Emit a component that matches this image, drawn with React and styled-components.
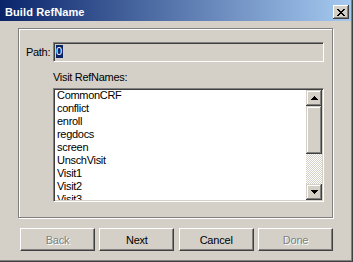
import React from 'react'
import styled, { createGlobalStyle } from 'styled-components'

const GlobalStyle = createGlobalStyle`
  html, body {
    margin: 0;
    padding: 0;
    background: #d4d0c8;
  }
  body {
    font-family: "Liberation Sans", Arial, sans-serif;
    font-size: 11px;
  }
  * {
    box-sizing: border-box;
  }
`

const Window = styled.div`
  width: 353px;
  height: 262px;
  padding: 0 2px 2px 0;
  background: #d4d0c8;
  box-shadow: inset -1px -1px #404040, inset -2px -2px #808080;
  display: flex;
  flex-direction: column;
`

const TitleBar = styled.div`
  height: 21px;
  display: flex;
  align-items: center;
  justify-content: space-between;
  padding: 3px 2px 0 5px;
  background: linear-gradient(to right, #0a246a, #a6caf0);
`

const Title = styled.div`
  color: #fff;
  font-weight: bold;
  font-size: 11px;
  letter-spacing: 0.1px;
`

const CloseButton = styled.div`
  width: 16px;
  height: 14px;
  display: flex;
  align-items: center;
  justify-content: center;
  background: #d4d0c8;
  box-shadow: inset -1px -1px #404040, inset 1px 1px #fff, inset -2px -2px #808080;
`

const Body = styled.div`
  padding: 7px 0 0 18px;
`

const Frame = styled.div`
  width: 315px;
  height: 190px;
  border: 1px solid #808080;
  box-shadow: inset 1px 1px #fff, 1px 1px #fff;
  padding: 13px 0 0 7px;
  display: grid;
  grid-template-columns: 27px 271px;
  align-content: start;
`

const Label = styled.div`
  color: #000;
  line-height: 13px;
  letter-spacing: -0.3px;
  white-space: nowrap;
  grid-column: ${(p) => p.$col || 'auto'};
  margin-top: ${(p) => p.$top || 0}px;
  margin-bottom: ${(p) => p.$bottom || 0}px;
  align-self: center;
`

const Sunken = styled.div`
  grid-column: 2;
  border: 1px solid;
  border-color: #808080 #fff #fff #808080;
  box-shadow: inset 1px 1px #404040, inset -1px -1px #d4d0c8;
`

const PathInput = styled(Sunken)`
  height: 20px;
  background: #d4d0c8;
  padding: 2px 0 0 2px;
  display: flex;
  align-items: flex-start;
`

const Selected = styled.span`
  background: #0a246a;
  color: #fff;
  line-height: 13px;
  padding: 0 1px 0 0;
`

const ListBox = styled(Sunken)`
  height: 114px;
  background: #fff;
  padding: 1px;
  display: flex;
`

const Items = styled.div`
  flex: 1;
  overflow: hidden;
  padding: 0 0 0 2px;
`

const ItemsInner = styled.div`
  margin-top: -1px;
`

const Item = styled.div`
  line-height: 13px;
  letter-spacing: -0.3px;
  white-space: nowrap;
  color: #000;
`

const ScrollBar = styled.div`
  width: 16px;
  display: flex;
  flex-direction: column;
`

const ScrollButton = styled.div`
  width: 16px;
  height: 16px;
  display: flex;
  align-items: center;
  justify-content: center;
  background: #d4d0c8;
  box-shadow: inset -1px -1px #404040, inset 1px 1px #d4d0c8, inset -2px -2px #808080, inset 2px 2px #fff;
`

const Thumb = styled(ScrollButton)`
  height: 48px;
`

const Track = styled.div`
  flex: 1;
  background: repeating-conic-gradient(#d4d0c8 0 25%, #fff 0 50%) 0 0 / 2px 2px;
`

const ButtonRow = styled.div`
  width: 315px;
  margin-top: 10px;
  padding-left: 2px;
  display: flex;
  justify-content: space-between;
`

const Button = styled.div`
  width: 75px;
  height: 23px;
  display: flex;
  align-items: center;
  justify-content: center;
  background: #d4d0c8;
  border: 1px solid;
  border-color: #fff #404040 #404040 #fff;
  box-shadow: inset -1px -1px #808080;
  color: ${(p) => (p.$disabled ? '#808080' : '#000')};
  text-shadow: ${(p) => (p.$disabled ? '1px 1px #fff' : 'none')};
  letter-spacing: -0.2px;
`

const closeCells = [
  [0, 0], [1, 0], [6, 0], [7, 0],
  [1, 1], [2, 1], [5, 1], [6, 1],
  [2, 2], [3, 2], [4, 2], [5, 2],
  [3, 3], [4, 3],
  [2, 4], [3, 4], [4, 4], [5, 4],
  [1, 5], [2, 5], [5, 5], [6, 5],
  [0, 6], [1, 6], [6, 6], [7, 6],
]

function CloseGlyph() {
  return (
    <svg width="8" height="7" viewBox="0 0 8 7" shapeRendering="crispEdges">
      {closeCells.map(([x, y]) => (
        <rect key={`${x}-${y}`} x={x} y={y} width="1" height="1" fill="#000" />
      ))}
    </svg>
  )
}

function Arrow({ down }) {
  return (
    <svg width="7" height="4" viewBox="0 0 7 4" shapeRendering="crispEdges">
      {down ? (
        <>
          <rect x="0" y="0" width="7" height="1" fill="#000" />
          <rect x="1" y="1" width="5" height="1" fill="#000" />
          <rect x="2" y="2" width="3" height="1" fill="#000" />
          <rect x="3" y="3" width="1" height="1" fill="#000" />
        </>
      ) : (
        <>
          <rect x="3" y="0" width="1" height="1" fill="#000" />
          <rect x="2" y="1" width="3" height="1" fill="#000" />
          <rect x="1" y="2" width="5" height="1" fill="#000" />
          <rect x="0" y="3" width="7" height="1" fill="#000" />
        </>
      )}
    </svg>
  )
}

const visits = ['CommonCRF', 'conflict', 'enroll', 'regdocs', 'screen', 'UnschVisit', 'Visit1', 'Visit2', 'Visit3']

export default function App() {
  return (
    <>
      <GlobalStyle />
      <Window>
        <TitleBar>
          <Title>Build RefName</Title>
          <CloseButton>
            <CloseGlyph />
          </CloseButton>
        </TitleBar>
        <Body>
          <Frame>
            <Label>Path:</Label>
            <PathInput>
              <Selected>0</Selected>
            </PathInput>
            <Label $col="2" $top={9} $bottom={4}>Visit RefNames:</Label>
            <ListBox>
              <Items>
                <ItemsInner>
                  {visits.map((v) => (
                    <Item key={v}>{v}</Item>
                  ))}
                </ItemsInner>
              </Items>
              <ScrollBar>
                <ScrollButton>
                  <Arrow />
                </ScrollButton>
                <Thumb />
                <Track />
                <ScrollButton>
                  <Arrow down />
                </ScrollButton>
              </ScrollBar>
            </ListBox>
          </Frame>
          <ButtonRow>
            <Button $disabled>Back</Button>
            <Button>Next</Button>
            <Button>Cancel</Button>
            <Button $disabled>Done</Button>
          </ButtonRow>
        </Body>
      </Window>
    </>
  )
}
